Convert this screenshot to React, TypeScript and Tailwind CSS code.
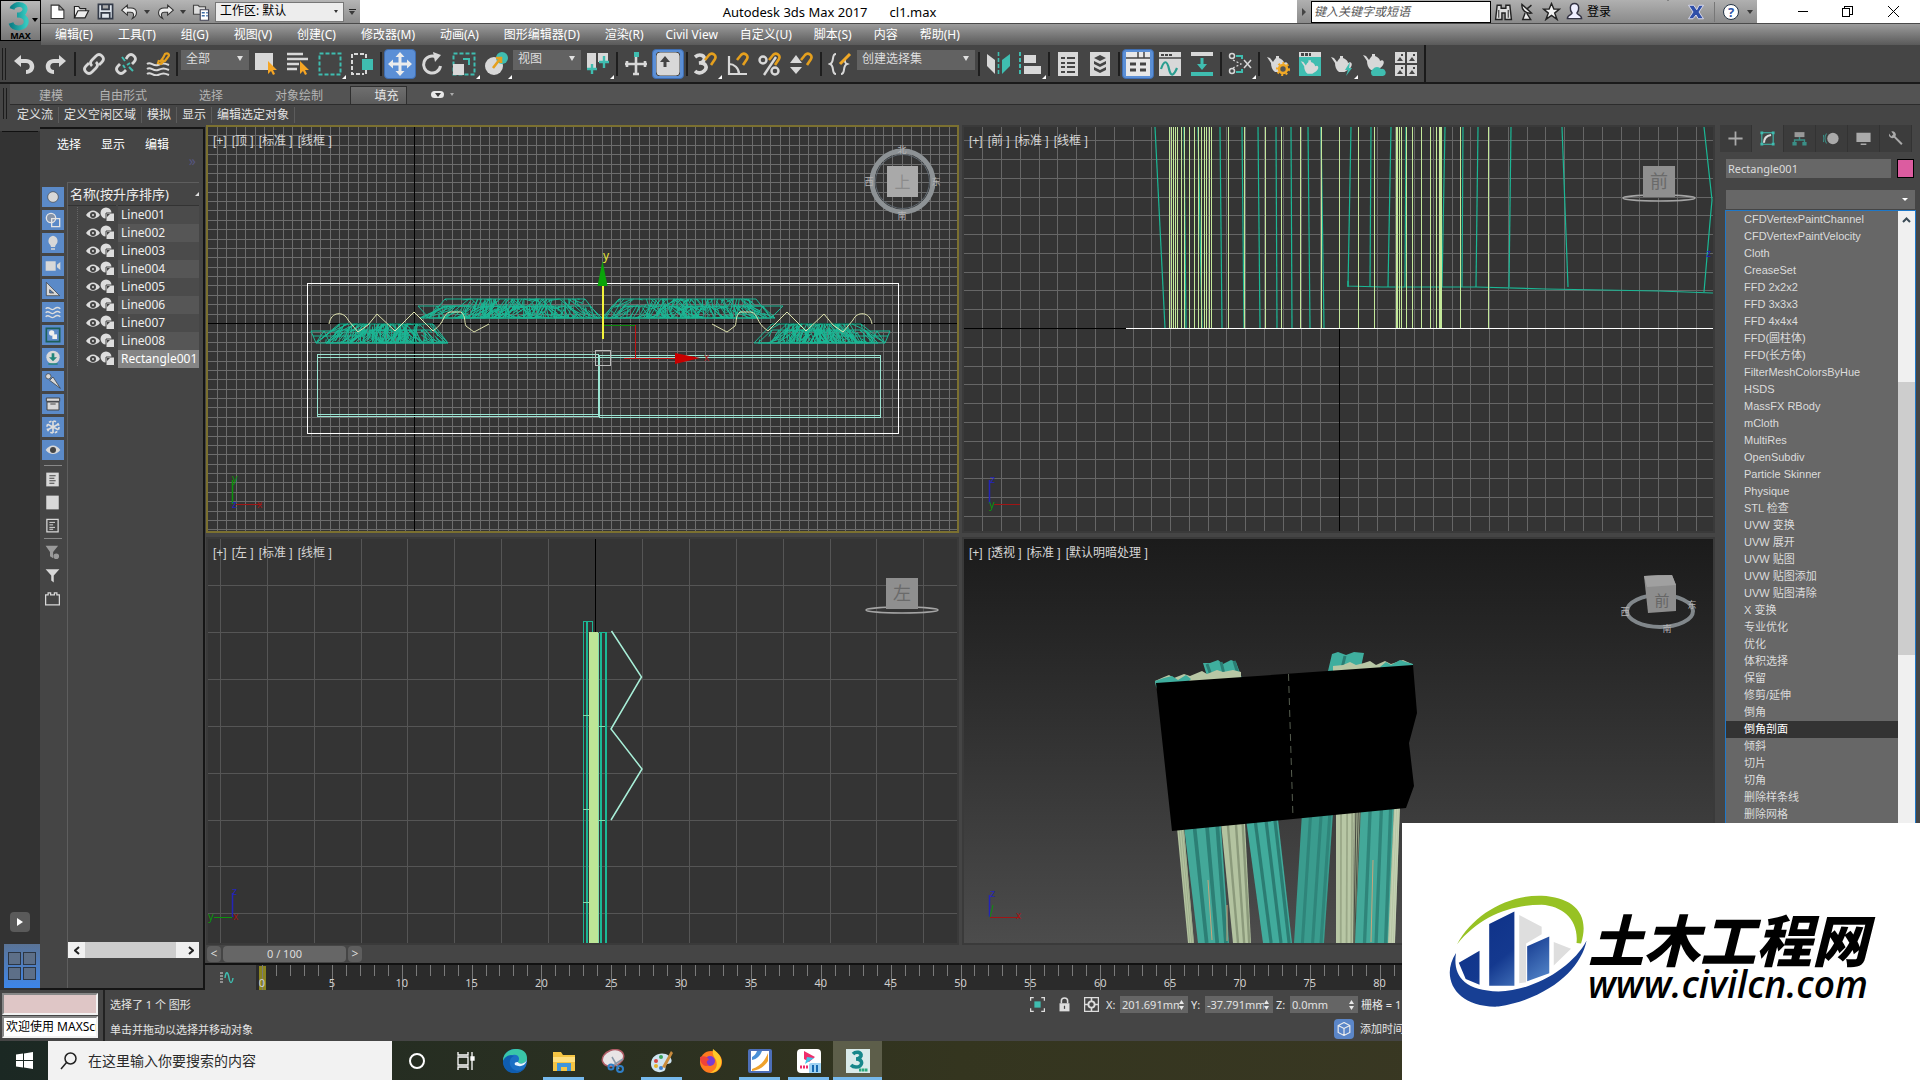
import React from 'react';

const TEAL = '#3fbdb0';
const LIGHT = '#d8d8d8';
const MESH = '#1bb795';
const CREAM = '#c3e89a';

type Kids = { children: React.ReactNode };

function Ico({ children, size = 24 }: Kids & { size?: number }) {
  return (
    <svg width={size} height={size} viewBox="0 0 24 24" fill="none" aria-hidden="true">
      {children}
    </svg>
  );
}

function Teapot({ y = 0 }: { y?: number }) {
  return (
    <path
      transform={`translate(0 ${y})`}
      fill={LIGHT}
      d="M1 5l3 1 3 4c1-2 2-3 3-4V4h3v2c3 1 5 3 5 5 3-2 5 1 3 4-1 2-3 3-5 4-1 1-2 1-3 1H9c-3-2-4-6-4-9z"
    />
  );
}

const Magnet = () => (
  <path d="M11 8l4-5c3-3 8 0 6 4l-4 6" stroke="#e5a01e" strokeWidth="2.6" />
);
const Cursor = ({ y = 0 }: { y?: number }) => (
  <path transform={`translate(0 ${y})`} d="M14 9v13l3-3 2 4 2-1-2-4h4z" fill="#f5a524" />
);

const toolIcons: Record<string, React.ReactNode> = {
  undo: <path d="M9 3L2 9l7 6v-4h5c5 0 5 7 0 7v4c11 0 11-15 0-15H9z" fill={LIGHT} />,
  redo: <path d="M15 3l7 6-7 6v-4h-5c-5 0-5 7 0 7v4C-1 22-1 7 10 7h5z" fill={LIGHT} />,
  link: (
    <g stroke={LIGHT} strokeWidth="2.8">
      <path d="M10 14c-2-2-2-4 0-6l4-4c2-2 4-2 6 0s2 4 0 6l-3 3" />
      <path d="M14 10c2 2 2 4 0 6l-4 4c-2 2-4 2-6 0s-2-4 0-6l3-3" />
    </g>
  ),
  unlink: (
    <g strokeWidth="2.8">
      <path stroke={LIGHT} d="M12 7l2-3c2-2 4-2 6 0s2 4 0 6l-2 2M12 18l-2 2c-2 2-4 2-6 0s-2-4 0-6l2-2" />
      <path stroke={TEAL} strokeWidth="2" d="M8 5l3 4M15 15l4 4M16 11l-3 2M9 13l2 3" />
    </g>
  ),
  bind: (
    <g strokeWidth="2">
      <path stroke={LIGHT} d="M1 12c4-3 6 3 11 1s6-2 11 0M1 17c4-3 6 3 11 1s6-2 11 0M1 22c4-3 6 3 11 1s6-2 11 0" />
      <path stroke="#e5a01e" strokeWidth="2.2" d="M14 10l3-4M13 8l-1 3 3 1 3-3M17 6l2-4c3-2 5 1 3 3l-3 4-3-1" />
    </g>
  ),
  select: (
    <>
      <rect x="1" y="1" width="18" height="17" fill={LIGHT} />
      <Cursor />
    </>
  ),
  byname: (
    <>
      <path stroke={LIGHT} strokeWidth="2.4" d="M1 2h16M1 7h21M1 12h12M1 17h10" />
      <Cursor />
    </>
  ),
  region: <rect x="1.5" y="1.5" width="21" height="21" stroke={TEAL} strokeWidth="2" strokeDasharray="4 2" />,
  windowsel: (
    <>
      <path stroke={LIGHT} strokeWidth="2" strokeDasharray="4 2" d="M14 2H2v20h12M16 2v4M16 18v4" />
      <rect x="12" y="7" width="11" height="11" fill={TEAL} />
    </>
  ),
  move: (
    <path
      fill="#ececec"
      d="M12 0l4.500 5H13.500v5.500H19V7.500l5 4.500-5 4.500V13.500h-5.500V19h3L12 24l-4.500-5h3v-5.500H5v3L0 12l5-4.500v3h5.500V5h-3z"
    />
  ),
  rotate: (
    <>
      <path stroke={LIGHT} strokeWidth="3" d="M16 5a8.500 8.500 0 1 0 4.500 9" />
      <path fill={LIGHT} d="M13 0l8 3-6 7z" />
    </>
  ),
  scale: (
    <>
      <rect x="1.500" y="1.500" width="21" height="21" stroke={TEAL} strokeWidth="2" strokeDasharray="4 2" />
      <rect x="1" y="12" width="11" height="11" fill={LIGHT} />
      <path d="M11 7h6v6" stroke={TEAL} strokeWidth="2" />
    </>
  ),
  place: (
    <>
      <circle cx="10" cy="14" r="9" fill={LIGHT} />
      <circle cx="18" cy="6" r="6" fill={TEAL} />
      <path d="M9 16l7-9M12 6h5v5" stroke="#e5a01e" strokeWidth="2.600" />
    </>
  ),
  pivot: (
    <>
      <path fill={LIGHT} d="M1 1h9v16H1zM12 1h10v9H12z" />
      <path stroke={TEAL} strokeWidth="2.400" d="M6 12v10M1 17h10M18 4v12M13 10h10" />
    </>
  ),
  manip: (
    <>
      <path stroke={LIGHT} strokeWidth="2.600" d="M12 4v19M1 12h22M3 9v6M21 9v6M9 22h6" />
      <rect x="10" y="0" width="5" height="5" fill={TEAL} />
    </>
  ),
  kbd: (
    <>
      <rect x="0" y="0" width="24" height="24" rx="4" fill={LIGHT} stroke="#444" />
      <path d="M9 4l5 6h-3.500v5h-3v-5H4z" fill="#444" />
    </>
  ),
  snap3: (
    <>
      <path stroke={LIGHT} strokeWidth="3.600" d="M1 5c5-4 11-1 9 3-1 3-3 3-5 3 7-1 9 5 5 8-3 3-7 2-9 0" />
      <Magnet />
    </>
  ),
  snapA: (
    <>
      <path stroke={LIGHT} strokeWidth="2.200" d="M3 4v18h18M3 12c5 0 10 4 10 10" />
      <Magnet />
    </>
  ),
  snapP: (
    <>
      <g stroke={LIGHT} strokeWidth="2.400">
        <circle cx="5" cy="8" r="3.500" />
        <circle cx="17" cy="19" r="3.500" />
        <path d="M18 5L6 23" />
      </g>
      <Magnet />
    </>
  ),
  snapS: (
    <>
      <path fill={LIGHT} d="M6 3l6 8H0zM6 22l6-7H0z" />
      <Magnet />
    </>
  ),
  named: (
    <>
      <path stroke={LIGHT} strokeWidth="2" d="M8 2C3 2 7 10 2 12c5 2 1 10 6 10M13 22c5 0 1-8 6-10-3-1-2-3-2-4" />
      <path stroke="#f0a826" strokeWidth="3" d="M12 12l10-10" />
    </>
  ),
  mirror: (
    <>
      <path fill={LIGHT} d="M1 2l8 6v14l-8-8z" />
      <path stroke={TEAL} strokeWidth="1.600" strokeDasharray="4 2" d="M12.500 0v24" />
      <path fill={TEAL} d="M24 2l-8 6v14l8-8z" />
    </>
  ),
  align: (
    <>
      <path stroke={TEAL} strokeWidth="2" strokeDasharray="4 2" d="M2 0v24" />
      <path fill={LIGHT} d="M6 3h12v8H6zM6 14h17v8H6z" />
    </>
  ),
  layer: (
    <>
      <rect x="2" y="0" width="20" height="24" fill={LIGHT} />
      <path stroke="#444" strokeWidth="2.200" d="M5 6h4M11 6h8M5 11h4M11 11h8M5 15h4M11 15h8M5 20h4M11 20h8" />
    </>
  ),
  layers: (
    <>
      <rect x="2" y="0" width="20" height="24" fill={LIGHT} />
      <path fill="#444" d="M12 3l6 3-6 3-6-3zM6 9l6 3 6-3v3l-6 3-6-3zM6 15l6 3 6-3v3l-6 3-6-3z" />
    </>
  ),
  ribbon: (
    <>
      <rect x="0" y="0" width="24" height="24" fill="#e8e8e8" />
      <path stroke="#444" strokeWidth="1.500" d="M0 6h24M12 0v6M18 0v6" />
      <path stroke="#444" strokeWidth="3" d="M4 12h6M14 12h6M4 18h6M14 18h6" />
    </>
  ),
  curve: (
    <>
      <rect x="1" y="0" width="22" height="24" fill={LIGHT} />
      <path stroke="#444" strokeWidth="1.500" d="M1 6h22" />
      <path stroke="#444" strokeWidth="2" d="M3 3h11" strokeDasharray="3 1" />
      <path stroke="#2a9d90" strokeWidth="2.200" d="M3 17c3-9 6-9 8 0s5 6 8-1" />
    </>
  ),
  schematic: (
    <>
      <rect x="1" y="0" width="22" height="4" fill={LIGHT} />
      <rect x="1" y="20" width="22" height="4" fill={TEAL} />
      <path fill={TEAL} d="M10.500 6h3v6H17l-5 6-5-6h3.500z" />
    </>
  ),
  material: (
    <>
      <g stroke={LIGHT} strokeWidth="1.500">
        <circle cx="4" cy="4" r="2.500" />
        <circle cx="4" cy="19" r="2.500" />
        <path d="M16 8l7 8M23 8l-7 8" />
      </g>
      <path stroke={TEAL} strokeWidth="2" d="M8 4h6v3M8 20h6v-3" />
      <path stroke={LIGHT} strokeWidth="1.200" strokeDasharray="2 2" d="M5 8l8 4-8 4" />
    </>
  ),
  rsetup: (
    <>
      <Teapot />
      <circle cx="17" cy="17" r="4" stroke="#f0a826" strokeWidth="2.600" fill="#555" />
      <circle cx="17" cy="17" r="6" stroke="#f0a826" strokeWidth="2" strokeDasharray="2 2.500" />
    </>
  ),
  rframe: (
    <>
      <rect x="1" y="0" width="22" height="24" fill={TEAL} />
      <rect x="1" y="0" width="22" height="5" fill={LIGHT} />
      <path stroke="#444" strokeWidth="3" d="M3 2.500h10" strokeDasharray="3 1" />
      <g transform="translate(2 5) scale(.84)">
        <Teapot />
      </g>
    </>
  ),
  render: (
    <>
      <Teapot />
      <path d="M20 10l-5 8h3l-2 6 6-8h-3z" fill={TEAL} />
    </>
  ),
  cloud: (
    <>
      <Teapot y={-2} />
      <path fill={TEAL} d="M11 24a4 4 0 0 1 0-7 5 5 0 0 1 8 0 3.500 3.500 0 0 1 2 7z" />
    </>
  ),
  gallery: (
    <>
      <path fill={LIGHT} d="M1 0h10v11H1zM13 0h10v11H13zM1 13h10v11H1zM13 13h10v11H13z" />
      <path fill="#444" d="M3 9l3-4 3 4zM15 9l3-4 3 4zM3 22l3-4 3 4zM15 22l3-4 3 4zM7 2h2v2H7zM19 2h2v2h-2zM7 15h2v2H7zM19 15h2v2h-2z" />
    </>
  ),
};

type Tool = { id: string; label: string; on?: boolean; fly?: boolean };

function ToolButton({ id, label, on, fly }: Tool) {
  return (
    <button
      type="button"
      aria-label={label}
      className={`relative flex h-[30px] w-8 items-center justify-center ${
        on ? 'rounded-sm border border-[#3f6db0] bg-[#5b8fd6]' : ''
      }`}
    >
      <Ico>{toolIcons[id]}</Ico>
      {fly && (
        <span className="absolute bottom-0 right-0 border-b-4 border-l-4 border-b-white border-l-transparent" />
      )}
    </button>
  );
}

const Sep = () => <div className="mx-[2px] h-6 w-[2px] bg-[#1e1e1e]" />;

function ToolSelect({ label, value, wide }: { label: string; value: string; wide?: boolean }) {
  return (
    <div
      className={`relative mx-px h-5 self-start bg-[#626262] text-[#dedede] ${wide ? 'w-[118px]' : 'w-[68px]'}`}
    >
      <select aria-label={label} className="block h-5 w-full appearance-none bg-transparent pb-[2px] pl-[5px] text-xs leading-4">
        <option>{value}</option>
      </select>
      <span className="pointer-events-none absolute right-[6px] top-[6px] border-x-[3px] border-t-[5px] border-x-transparent border-t-[#e0e0e0]" />
    </div>
  );
}

function Toolbar() {
  return (
    <div className="flex h-[39px] border-b-2 border-[#1a1a1a] bg-[#454545]">
      <div className="flex items-center border-r-2 border-[#1a1a1a] pr-[2px]">
        <div className="mx-[2px] h-8 w-1 border-x border-[#1c1c1c]" />
        <ToolButton id="undo" label="撤消" />
        <ToolButton id="redo" label="重做" />
        <Sep />
        <ToolButton id="link" label="链接" />
        <ToolButton id="unlink" label="取消链接" />
        <ToolButton id="bind" label="绑定到空间扭曲" />
        <Sep />
        <div className="flex h-[28px]">
          <ToolSelect label="选择过滤器" value="全部" />
        </div>
        <ToolButton id="select" label="选择对象" />
        <ToolButton id="byname" label="按名称选择" />
        <ToolButton id="region" label="矩形选择区域" fly />
        <ToolButton id="windowsel" label="窗口/交叉" />
        <Sep />
        <ToolButton id="move" label="选择并移动" on />
        <ToolButton id="rotate" label="选择并旋转" />
        <ToolButton id="scale" label="选择并缩放" fly />
        <ToolButton id="place" label="选择并放置" fly />
        <div className="flex h-[28px]">
          <ToolSelect label="参考坐标系" value="视图" />
        </div>
        <ToolButton id="pivot" label="使用轴点中心" fly />
        <Sep />
        <ToolButton id="manip" label="选择并操纵" />
        <ToolButton id="kbd" label="键盘快捷键覆盖" on />
        <Sep />
        <ToolButton id="snap3" label="捕捉开关" fly />
        <ToolButton id="snapA" label="角度捕捉" />
        <ToolButton id="snapP" label="百分比捕捉" />
        <ToolButton id="snapS" label="微调器捕捉" />
        <Sep />
        <ToolButton id="named" label="编辑命名选择集" />
        <div className="flex h-[28px]">
          <ToolSelect label="命名选择集" value="创建选择集" wide />
        </div>
        <Sep />
        <ToolButton id="mirror" label="镜像" />
        <ToolButton id="align" label="对齐" fly />
        <Sep />
        <ToolButton id="layer" label="场景资源管理器" />
        <ToolButton id="layers" label="层资源管理器" />
        <Sep />
        <ToolButton id="ribbon" label="切换功能区" on />
        <ToolButton id="curve" label="曲线编辑器" />
        <ToolButton id="schematic" label="图解视图" />
        <Sep />
        <ToolButton id="material" label="材质编辑器" fly />
        <Sep />
        <ToolButton id="rsetup" label="渲染设置" />
        <ToolButton id="rframe" label="渲染帧窗口" />
        <ToolButton id="render" label="渲染产品" fly />
        <ToolButton id="cloud" label="云渲染" />
        <ToolButton id="gallery" label="渲染库" />
      </div>
    </div>
  );
}

const Caret = () => <span className="border-x-[3px] border-t-4 border-x-transparent border-t-[#3a3a3a]" />;

const quickIcons: [string, React.ReactNode][] = [
  ['新建', <path key="n" d="M3 3h11l7 7v12H3zM14 3v7h7" fill="#fff" stroke="#333" strokeWidth="1.500" />],
  ['打开', <path key="o" d="M2 21V5h6l2 3h8v3M2 21l5-10h15l-5 10z" fill="#eee" stroke="#222" strokeWidth="1.600" />],
  ['保存', <path key="s" d="M2 2h20v20H2zM7 2v7h10V2M6 22v-8h12v8" fill="#dfe6ee" stroke="#333a48" strokeWidth="2.400" />],
];

function TitleBar() {
  return (
    <div className="flex h-6 border-b border-[#4a4a4a] bg-white">
      <div className="flex items-center bg-gradient-to-b from-[#b5b5b5] to-[#8c8c8c] pl-1">
        {quickIcons.map(([label, icon]) => (
          <button key={label} type="button" aria-label={label} className="flex w-6 justify-center">
            <Ico size={17}>{icon}</Ico>
          </button>
        ))}
        <button type="button" aria-label="撤消操作" className="flex w-6 justify-center">
          <Ico size={17}>
            <path d="M9 3L1 10l8 7v-4h5c4 0 5 4 2 9 8-4 8-15-2-15H9z" fill="#eee" stroke="#333" strokeWidth="1.500" />
          </Ico>
        </button>
        <span className="flex w-3 justify-center"><Caret /></span>
        <button type="button" aria-label="重做操作" className="flex w-6 justify-center">
          <Ico size={17}>
            <path d="M15 3l8 7-8 7v-4h-5c-4 0-5 4-2 9C0 18 0 7 10 7h5z" fill="#eee" stroke="#333" strokeWidth="1.500" />
          </Ico>
        </button>
        <span className="flex w-3 justify-center"><Caret /></span>
        <button type="button" aria-label="项目文件夹" className="mr-[2px] flex w-6 justify-center">
          <Ico size={18}>
            <path d="M2 3h6l2 2h8v10H2z" fill="#ddd" stroke="#444" strokeWidth="1.500" />
            <path d="M11 9h11v14H11z" fill="#fff" stroke="#445" strokeWidth="1.500" />
            <path d="M13 13h4M13 17h4M19 13h2M19 17h2" stroke="#3c6ba5" strokeWidth="2" />
          </Ico>
        </button>
        <div className="relative h-5 w-[129px] border border-[#777] bg-[#ededed]">
          <select aria-label="工作区" className="block h-[18px] w-full appearance-none bg-transparent pb-px pl-1 text-xs leading-4 text-black">
            <option>工作区: 默认</option>
          </select>
          <span className="pointer-events-none absolute right-[5px] top-[7px] border-x-[2px] border-t-[3px] border-x-transparent border-t-[#333]" />
        </div>
        <button type="button" aria-label="自定义快速访问" className="flex w-4 flex-col items-center gap-px">
          <span className="h-px w-[7px] bg-[#222]" />
          <Caret />
        </button>
      </div>
      <h1 className="flex flex-1 items-center justify-center gap-[22px] pl-[2px] text-[13px] leading-4 text-black">
        <span>Autodesk 3ds Max 2017</span>
        <span>cl1.max</span>
      </h1>
      <div className="flex w-[460px] items-center bg-gradient-to-b from-[#b0b0b0] to-[#8a8a8a] text-black">
        <span className="mx-[5px] border-y-[4px] border-l-4 border-y-transparent border-l-[#444]" />
        <input
          aria-label="搜索"
          placeholder="键入关键字或短语"
          className="h-[22px] w-[180px] border border-black bg-white pl-[2px] text-xs italic text-black placeholder:text-[#555]"
        />
        <button type="button" aria-label="查找" className="flex w-6 justify-center">
          <Ico size={19}>
            <path d="M4 4h5v4h6V4h5l2 18h-8v-8h-4v8H2z" fill="#ddd" stroke="#222" strokeWidth="1.800" />
            <path d="M6 10v10M18 10v10" stroke="#444" strokeWidth="1.500" />
          </Ico>
        </button>
        <button type="button" aria-label="通讯中心" className="flex w-6 justify-center">
          <Ico size={19}>
            <path d="M5 3c-1 7 5 12 12 11zM11 9l6-5M9 14l-3 8h10l-5-8" fill="#eee" stroke="#222" strokeWidth="1.800" />
          </Ico>
        </button>
        <button type="button" aria-label="收藏夹" className="flex w-6 justify-center">
          <Ico size={19}>
            <path d="M12 2l3 7h7l-6 5 3 8-7-5-7 5 3-8-6-5h7z" fill="#f2f2f2" stroke="#222" strokeWidth="1.800" />
          </Ico>
        </button>
        <button type="button" className="ml-[2px] flex items-center gap-[3px] text-xs leading-4">
          <Ico size={19}>
            <path d="M12 2c7 0 6 9 3 12 0 2 6 2 6 7H3c0-5 6-5 6-7-3-3-4-12 3-12z" fill="#eef" stroke="#334" strokeWidth="1.800" />
          </Ico>
          登录
        </button>
        <span className="ml-auto mr-4"><Caret /></span>
        <button type="button" aria-label="Exchange" className="mr-[9px]">
          <Ico size={18}>
            <path d="M2 3h7l4 6 3-6h6l-6 9 6 9h-7l-3-5-4 5H2l6-9z" fill="#2f4fa8" stroke="#dde" strokeWidth="1.300" />
          </Ico>
        </button>
        <span className="mr-2 h-5 w-px bg-[#777]" />
        <button type="button" aria-label="帮助" className="flex h-4 w-4 items-center justify-center rounded-full border border-[#234] bg-white text-[13px] font-bold leading-4 text-[#2f56a8]">
          ?
        </button>
        <span className="ml-2 mr-1 flex"><Caret /></span>
      </div>
      <div className="flex w-[163px] items-center justify-around pl-6 pr-1 text-black">
        <button type="button" aria-label="最小化" className="h-px w-[10px] bg-black" />
        <button type="button" aria-label="还原">
          <svg width="11" height="11" fill="none" stroke="#000" shapeRendering="crispEdges">
            <path d="M.5 2.500h7v8h-7zM2.500 2.500v-2h8v8h-3" />
          </svg>
        </button>
        <button type="button" aria-label="关闭">
          <svg width="11" height="11" stroke="#000"><path d="M0 0l11 11M11 0L0 11" /></svg>
        </button>
      </div>
    </div>
  );
}

const menus = ['编辑(E)', '工具(T)', '组(G)', '视图(V)', '创建(C)', '修改器(M)', '动画(A)', '图形编辑器(D)', '渲染(R)'];
const moreMenus = ['Civil View', '自定义(U)', '脚本(S)', '内容', '帮助(H)'];

const MenuItem = ({ name }: { name: string }) => (
  <button type="button" className="whitespace-nowrap">
    {name}
  </button>
);

function Header() {
  return (
    <header className="flex h-[45px] bg-[#454545]">
      <button type="button" aria-label="应用程序菜单" className="relative flex h-[41px] w-[41px] flex-col items-center border border-black bg-gradient-to-b from-[#b8b8b8] to-[#777]">
        <svg width="24" height="30" viewBox="0 0 24 30" className="mr-1" fill="none">
          <defs>
            <linearGradient id="three" x1="0" x2="1">
              <stop offset="0" stopColor="#0c7f86" />
              <stop offset="1" stopColor="#35c9c0" />
            </linearGradient>
          </defs>
          <path d="M5 8c2-6 14-6 13 1-1 4-5 5-8 5 12 0 12 12 2 13-4 0-7-2-8-5" stroke="url(#three)" strokeWidth="5" />
        </svg>
        <span className="text-[9px] font-bold leading-[9px] text-black">MAX</span>
        <span className="absolute right-[2px] top-[17px] border-x-[3px] border-t-4 border-x-transparent border-t-black" />
      </button>
      <div className="flex-1">
        <TitleBar />
        <nav className="flex h-[21px] items-center gap-[22px] bg-gradient-to-b from-[#9c9c9c] to-[#5a5a5a] pl-[14px] text-xs leading-4 text-white">
          <div className="flex gap-[25px]">
            {menus.map((m) => <MenuItem key={m} name={m} />)}
          </div>
          {moreMenus.map((m) => <MenuItem key={m} name={m} />)}
        </nav>
      </div>
    </header>
  );
}

function Ribbon() {
  return (
    <div className="flex bg-[#454545] text-xs text-[#b4b4b4]">
      <div className="mx-[3px] my-1 w-1 border-x border-[#1c1c1c]" />
      <div className="flex-1">
        <div className="flex h-[21px] items-end border-b border-[#2c2c2c] bg-[#535353]">
          <div className="flex items-center gap-[52px] pl-[29px] leading-[17px]">
            <div className="flex gap-9">
              <button type="button">建模</button>
              <button type="button">自由形式</button>
            </div>
            <button type="button">选择</button>
            <button type="button">对象绘制</button>
          </div>
          <button type="button" className="ml-[27px] h-[18px] w-[57px] border border-b-0 border-[#2e2e2e] bg-gradient-to-b from-[#6f6f6f] to-[#5c5c5c] pl-4 leading-[17px] text-[#e6e6e6]">
            填充
          </button>
          <button type="button" aria-label="功能区选项" className="mb-[6px] ml-6 flex items-center gap-[6px]">
            <span className="flex h-[7px] w-[13px] items-center justify-center rounded-sm bg-[#e8e8e8]"><Caret /></span>
            <span className="border-x-2 border-t-[3px] border-x-transparent border-t-[#aaa]" />
          </button>
        </div>
        <div className="flex h-[18px] items-center pl-[2px] pt-[2px] text-[#e2e2e2]">
          {['定义流', '定义空闲区域', '模拟', '显示', '编辑选定对象'].map((t) => (
            <button key={t} type="button" className="border-r border-[#5c5c5c] px-[5px] leading-4">
              {t}
            </button>
          ))}
        </div>
      </div>
    </div>
  );
}

const filterIcons: [string, React.ReactNode][] = [
  ['几何体', <circle key="a" cx="12" cy="12" r="8" fill={LIGHT} stroke="#444" />],
  ['图形', <g key="b" stroke="#e4e4e4" strokeWidth="2"><circle cx="9" cy="9" r="7" fill="#8593a8" /><path d="M10 10h12v12H10z" /></g>],
  ['灯光', <path key="c" d="M12 1a8 8 0 0 1 4 14l-1 3H9l-1-3a8 8 0 0 1 4-14zM9 20h6v2H9z" fill={LIGHT} />],
  ['摄影机', <path key="d" d="M1 5h15v14H1zM18 10l5-4v12l-5-4z" fill={LIGHT} />],
  ['辅助对象', <path key="e" d="M2 2l20 20H2zM7 13v5h6z" fill={LIGHT} fillRule="evenodd" stroke="#333" />],
  ['空间扭曲', <path key="f" d="M1 7c5-5 8 4 12 1s6-4 10-1M1 13c5-5 8 4 12 1s6-4 10-1M1 19c5-5 8 4 12 1s6-4 10-1" stroke="#ddd" strokeWidth="2" />],
  ['组', <g key="g"><path d="M2 2h20v20H2z" stroke="#1c5f5a" strokeWidth="2.500" /><circle cx="10" cy="9" r="4" fill="#eee" /><path d="M11 11h7v7h-7z" fill="#eee" /></g>],
  ['外部参照', <g key="h"><circle cx="12" cy="11" r="10" fill={LIGHT} /><path d="M10 5h4v6h4l-6 6-6-6h4zM5 20h14v2H5z" fill="#21857a" /></g>],
  ['骨骼', <g key="i" fill={LIGHT} stroke="#333"><circle cx="5" cy="5" r="4" /><path d="M7 11l5-5 11 17z" /></g>],
  ['容器', <path key="j" d="M2 3h20v5H2zM3 9h18v12H3zM8 12h8" fill={LIGHT} stroke="#444" strokeWidth="1.500" />],
  ['冻结', <g key="k" stroke="#ddd" strokeWidth="2.500"><circle cx="12" cy="12" r="9" strokeDasharray="4 3" /><path d="M12 3v18M4 8l16 8M20 8L4 16" /></g>],
  ['隐藏', <g key="l"><path d="M1 12c6-9 16-9 22 0-6 8-16 8-22 0z" fill={LIGHT} /><circle cx="12" cy="12" r="4.500" fill="#444" /></g>],
];

const plainIcons: [string, React.ReactNode][] = [
  ['全部显示', <g key="a"><path d="M2 1h20v22H2z" fill={LIGHT} /><path d="M7 6h10M7 10h8M7 14h10M7 18h8" stroke="#444" strokeWidth="1.800" /></g>],
  ['全部不显示', <path key="b" d="M2 1h20v22H2z" fill={LIGHT} />],
  ['反转显示', <g key="c" stroke={LIGHT} strokeWidth="2"><path d="M3 2h18v20H3z" /><path d="M7 7h9M7 11h6M7 15h9M7 18h6" strokeWidth="1.600" /></g>],
];
const funnelIcons: [string, React.ReactNode][] = [
  ['过滤器设置', <g key="a" fill="#9a9a9a"><path d="M1 1h20l-8 10v10l-5-3v-7z" /><circle cx="18" cy="18" r="3.500" stroke="#9a9a9a" strokeWidth="2" /></g>],
  ['过滤器', <path key="b" d="M1 2h22l-9 10v11l-4-3v-8z" fill={LIGHT} />],
  ['包围盒', <path key="c" d="M1 6h4V3h4v3h6V3h4v3h4v16H1z" stroke={LIGHT} strokeWidth="2" />],
];

const Chevrons = () => <span className="text-sm leading-4 text-[#55557f]">»</span>;

const objects = ['Line001', 'Line002', 'Line003', 'Line004', 'Line005', 'Line006', 'Line007', 'Line008', 'Rectangle001'];

function Explorer() {
  return (
    <aside className="flex w-[205px] shrink-0 bg-[#454545]">
      <div className="flex w-[40px] flex-col border-t-8 border-[#454545] bg-[#333]">
        <div className="mx-[2px] h-px bg-[#111]" />
        <button type="button" aria-label="展开" className="mb-3 ml-[10px] mt-auto flex h-5 w-5 items-center justify-center rounded-sm bg-[#5a5a5a]">
          <span className="border-y-4 border-l-[6px] border-y-transparent border-l-white" />
        </button>
        <button type="button" aria-label="视口布局" className="mb-[2px] ml-1 grid h-11 w-9 grid-cols-2 grid-rows-2 gap-[2px] bg-gradient-to-b from-[#5a7396] to-[#3c86ea] px-1 pb-2 pt-2">
          {[0, 1, 2, 3].map((n) => (
            <span key={n} className="border border-[#2c3644] bg-[#5d6f88]" />
          ))}
        </button>
      </div>
      <div className="mt-1 flex min-w-0 flex-1 flex-col border-b-2 border-r-2 border-t-2 border-[#151515] pr-1">
        <div className="flex h-6 items-end gap-5 pl-[17px] text-xs leading-4 text-white">
          <button type="button">选择</button>
          <button type="button">显示</button>
          <button type="button">编辑</button>
        </div>
        <div className="flex h-[29px] justify-end pr-[3px]"><Chevrons /></div>
        <div className="flex flex-1">
          <div className="flex w-[27px] flex-col items-center gap-[3px] pr-[2px] pt-[5px]">
            {filterIcons.map(([label, icon]) => (
              <button key={label} type="button" aria-label={label} className="flex h-5 w-[22px] items-center justify-center bg-[#5b8ac8]">
                <Ico size={16}>{icon}</Ico>
              </button>
            ))}
            <div className="mt-[2px] h-px w-[18px] bg-[#888]" />
            {plainIcons.map(([label, icon]) => (
              <button key={label} type="button" aria-label={label} className="flex h-5 w-[22px] items-center justify-center">
                <Ico size={15}>{icon}</Ico>
              </button>
            ))}
            <div className="h-px w-[18px] bg-[#888]" />
            {funnelIcons.map(([label, icon]) => (
              <button key={label} type="button" aria-label={label} className="flex h-5 w-[22px] items-center justify-center">
                <Ico size={15}>{icon}</Ico>
              </button>
            ))}
          </div>
          <div className="flex flex-1 flex-col border-l border-t border-[#5e5e5e]">
            <table className="w-full border-collapse text-left">
              <thead>
                <tr className="h-[22px] border-b border-[#333] text-[13px] leading-5 text-[#eee]">
                  <th colSpan={2} className="pl-[2px] font-normal">
                    <div className="flex items-center justify-between">
                      名称(按升序排序)
                      <span className="border-b-4 border-l-4 border-b-[#ddd] border-l-transparent" />
                    </div>
                  </th>
                </tr>
              </thead>
              <tbody>
                {objects.map((o, i) => (
                  <tr key={o} className="h-[18px] text-[12px] leading-[18px] text-[#eee]">
                    <td className="w-[49px] p-0">
                      <div className="ml-[9px] flex items-center border-l border-dotted border-[#666] pl-[8px]">
                        <svg width="14" height="10" viewBox="0 0 14 10">
                          <path d="M0 5c4-6 10-6 14 0-4 5-10 5-14 0z" fill="#ddd" />
                          <circle cx="7" cy="5" r="3" fill="#444" />
                          <circle cx="7" cy="5" r="1" fill="#ddd" />
                        </svg>
                        <svg width="15" height="15" viewBox="0 0 15 15">
                          <circle cx="6" cy="6" r="5.500" fill="#ddd" />
                          <path d="M6 6h8.500v8.500H6z" fill="#ddd" stroke="#444" />
                          <path d="M7 10l3-3h-3z" fill="#444" />
                        </svg>
                      </div>
                    </td>
                    <td className={`border-l-2 border-[#454545] p-0 pl-[3px] ${o === 'Rectangle001' ? 'bg-[#858585] text-white' : i % 2 ? 'bg-[#565656]' : 'bg-[#4b4b4b]'}`}>
                      {o}
                    </td>
                  </tr>
                ))}
              </tbody>
            </table>
            <div className="mb-[30px] mt-auto flex h-4 items-center justify-between bg-[#f0f0f0] text-[#222]">
              <button type="button" aria-label="向左" className="flex w-[17px] justify-center">
                <svg width="6" height="9" fill="none" stroke="currentColor" strokeWidth="2"><path d="M5 1L1 4.500 5 8" /></svg>
              </button>
              <div className="mr-[6px] h-4 flex-1 bg-[#cdcdcd]" />
              <button type="button" aria-label="向右" className="flex w-[17px] justify-center">
                <svg width="6" height="9" fill="none" stroke="currentColor" strokeWidth="2"><path d="M1 1l4 3.500L1 8" /></svg>
              </button>
            </div>
          </div>
        </div>
      </div>
    </aside>
  );
}

function range(from: number, to: number, origin: number, step: number) {
  const out: number[] = [];
  for (let k = Math.ceil((from - origin) / step); origin + k * step < to; k++) out.push(Math.round(origin + k * step) + 0.5);
  return out;
}

type GridProps = { box: [number, number, number, number]; ox: number; oy: number; step: number; color: string };

function Grid({ box: [x, y, w, h], ox, oy, step, color }: GridProps) {
  return (
    <path
      shapeRendering="crispEdges"
      stroke={color}
      fill="none"
      d={
        range(x, x + w, ox, step).map((v) => `M${v} ${y}v${h}`).join('') +
        range(y, y + h, oy, step).map((v) => `M${x} ${v}h${w}`).join('')
      }
    />
  );
}

function meshPath(tl: number, tr: number, bl: number, br: number, top: number, bottom: number, seed: number) {
  let s = seed;
  const rnd = () => {
    s = (s * 16807) % 2147483647;
    return s / 2147483647;
  };
  const at = (u: number, v: number) => {
    const l = tl + (bl - tl) * v;
    const r = tr + (br - tr) * v;
    return `${(l + (r - l) * u).toFixed(1)} ${(top + (bottom - top) * v).toFixed(1)}`;
  };
  let d = `M${at(0, 0)}L${at(1, 0)}L${at(1, 1)}L${at(0, 1)}Z`;
  for (let i = 0; i < 120; i++) {
    const u = Math.min(0.96, Math.max(0.02, (rnd() + rnd()) / 2 + (rnd() - 0.5) * 0.5));
    const v = rnd();
    const u2 = Math.min(1, Math.max(0, u + (rnd() - 0.5) * 0.16));
    d += `M${at(u, v)}L${at(u2, rnd() > 0.5 ? 1 : 0)}`;
  }
  return d;
}

function Label({ parts }: { parts: string[] }) {
  return (
    <div className="absolute left-[5px] top-[6px] flex gap-[5px] font-['Liberation_Sans','Noto_Sans_CJK_SC',sans-serif] text-xs leading-4 text-[#d6d6d6]">
      {parts.map((p) => (
        <button key={p} type="button" className="whitespace-pre">{p}</button>
      ))}
    </div>
  );
}

function View({ parts, box, active, shaded, children }: Kids & { parts: string[]; box: [number, number, number, number]; active?: boolean; shaded?: boolean }) {
  return (
    <section
      className={`relative overflow-hidden border-2 ${active ? 'border-[#7b7030]' : 'border-[#3a3a3a]'} ${
        shaded ? 'bg-gradient-to-b from-[#1b1b1b] to-[#4c4c4c]' : 'bg-[#343434]'
      }`}
    >
      <svg className="absolute inset-0 h-full w-full" viewBox={box.join(' ')} preserveAspectRatio="xMinYMin slice" fill="none">
        {children}
      </svg>
      <Label parts={parts} />
    </section>
  );
}

function FlatCube({ x, y, face }: { x: number; y: number; face: string }) {
  return (
    <g>
      <ellipse cx={x} cy={y + 17} rx="36" ry="3" stroke="#a5a5a5" strokeWidth="1.500" />
      <rect x={x - 16} y={y - 15} width="32" height="31" fill="#8f8f8f" />
      <text x={x} y={y + 7} textAnchor="middle" fontSize="18" fill="#6a6a6a">{face}</text>
    </g>
  );
}

const curve =
  'M329 324C331 311 344 311 348 320L358 332 368 325 377 314 395 331 414 312 433 331C446 322 442 314 450 312L461 312C466 316 464 322 466 326L474 332 489 324';

function TopView() {
  const box: [number, number, number, number] = [208, 127, 749, 404];
  return (
    <View parts={['[+]', '[顶 ]', '[标准 ]', '[线框 ]']} box={box} active>
      <Grid box={box} ox={414} oy={323} step={9.38} color="#6c6c6c" />
      <path d="M414.500 127v404M208 323.500h749" stroke="#000" shapeRendering="crispEdges" />
      <g stroke={MESH}>
        <path d={meshPath(445, 585, 429, 600, 299, 318, 11)} />
        <path d={meshPath(445, 590, 420, 602, 306, 318, 29)} />
        <path d={meshPath(619, 756, 602, 771, 299, 318, 53)} />
        <path d={meshPath(612, 762, 604, 775, 306, 318, 71)} />
        <path d={meshPath(339, 433, 316, 448, 324, 343, 97)} />
        <path d={meshPath(339, 433, 326, 446, 330, 343, 131)} />
        <path d={meshPath(772, 861, 754, 885, 324, 343, 173)} />
        <path d={meshPath(772, 865, 758, 878, 330, 343, 211)} />
        <path d="M418 306h52M418 306l11 12 8-12 8 12 8-12M783 306h-50M783 306l-12 12-8-12-8 12-8-12M311 331h30M311 331l5 12 8-12 6 12M313 336h50M890 331h-30M890 331l-5 12-8-12-6 12M888 336h-50" />
      </g>
      <g stroke="#dfe3ae">
        <path d={curve} />
        <path d={curve} transform="translate(1201 0) scale(-1 1)" />
      </g>
      <g shapeRendering="crispEdges">
        <path d="M307.500 283.500h591v150h-591z" stroke="#fff" />
        <path d="M317.500 354.500h281v62h-281zM317 357.500h281M317 414.500h281M599.500 355.500h281v62h-281zM599 357.500h281M599 415.500h281" stroke="#9be5d3" />
        <path d="M603 325.500h33" stroke="#0b8a0b" />
        <path d="M635.500 325v33M624 358.500h52" stroke="#c41414" />
        <path d="M595.500 350.500h15v15h-15z" stroke="#bbb" />
        <path d="M602.500 282v57" stroke="#f4f43a" strokeWidth="2" />
      </g>
      <path d="M602.500 261l5 25h-10z" fill="#09a509" />
      <path d="M675 353l25 5-25 6z" fill="#c80000" />
      <text x="603" y="260" fontSize="12" fill="#e4e43a">y</text>
      <text x="704" y="361" fontSize="10" fill="#b01818">x</text>
      <circle cx="902.500" cy="181.500" r="30.500" stroke="#8d9295" strokeWidth="5" />
      <circle cx="902.500" cy="181.500" r="27" stroke="#5f6870" />
      <rect x="887" y="166" width="31" height="31" fill="#a9a9a9" />
      <text x="902.500" y="188" textAnchor="middle" fontSize="16" fill="#8c8c8c">上</text>
      <g fontSize="9" fill="#b4b4b4" textAnchor="middle">
        <text x="902" y="153">北</text>
        <text x="902" y="219">南</text>
        <text x="869" y="185">西</text>
        <text x="936" y="185">东</text>
      </g>
      <path d="M232.500 504v-24" stroke="#0c930c" strokeWidth="1.500" />
      <path d="M236 504.500h26" stroke="#a01515" />
      <text x="232" y="482" fontSize="11" fill="#0c930c">y</text>
      <text x="257" y="508" fontSize="10" fill="#a01515">x</text>
      <text x="232" y="508" fontSize="10" fill="#2020c0">z</text>
    </View>
  );
}

const creamLines = [1169, 1171, 1173, 1175, 1177, 1181, 1184, 1189, 1194, 1198, 1201, 1204, 1206, 1209, 1211, 1228, 1244, 1265, 1281, 1300, 1321, 1339, 1358, 1374, 1396, 1397, 1399, 1401, 1406, 1412, 1421, 1430, 1436, 1439, 1440, 1441, 1460, 1488];
const tealFull: [number, number][] = [[1155, 1165], [1184, 1186], [1198, 1202], [1220, 1222], [1242, 1244], [1258, 1260], [1276, 1277], [1291, 1292], [1308, 1310], [1321, 1324]];
const tealShort: [number, number][] = [[1351, 1348], [1371, 1370], [1391, 1388], [1406, 1405], [1445, 1442], [1463, 1462], [1478, 1476], [1511, 1509], [1562, 1568]];

function FrontView() {
  const box: [number, number, number, number] = [964, 127, 749, 404];
  return (
    <View parts={['[+]', '[前 ]', '[标准 ]', '[线框 ]']} box={box}>
      <Grid box={box} ox={1339} oy={328} step={18.77} color="#666" />
      <g stroke={MESH} strokeWidth="1.200">
        {tealFull.map(([a, b]) => <path key={a} d={`M${a} 127L${b} 328`} />)}
        {tealShort.map(([a, b]) => <path key={a} d={`M${a} 127L${b} 287`} />)}
        <path d="M1704 127l8 73-2 22-6 70M1348 281v5l34 1h94M1405 287h71l70 2 113 2 54 2" />
      </g>
      <path d={creamLines.map((v) => `M${v}.500 127v201`).join('')} stroke={CREAM} shapeRendering="crispEdges" />
      <path d="M964 328.500h162M1339.500 329v202" stroke="#000" shapeRendering="crispEdges" />
      <path d="M1126 328.500h588" stroke="#fff" shapeRendering="crispEdges" />
      <FlatCube x={1659} y={181} face="前" />
      <path d="M989.500 504v-24" stroke="#2424b8" strokeWidth="1.500" />
      <path d="M994 504.500h26" stroke="#a01515" />
      <text x="990" y="483" fontSize="11" fill="#2424b8">z</text>
      <text x="989" y="508" fontSize="11" fill="#0c930c">y</text>
      <text x="1706" y="257" fontSize="11" fill="#2424b8">z</text>
    </View>
  );
}

function LeftView() {
  const box: [number, number, number, number] = [208, 539, 749, 404];
  return (
    <View parts={['[+]', '[左 ]', '[标准 ]', '[线框 ]']} box={box}>
      <Grid box={box} ox={595} oy={585} step={46.9} color="#555" />
      <g shapeRendering="crispEdges">
        <path d="M595.500 539v94" stroke="#000" />
        <path d="M583.500 943V621.500h9V632M586.500 622v321M606.500 943V632.500h-8M605.500 633v310M601.500 633v310" stroke={MESH} />
        <path d="M587.500 622v321M600.500 633v310" stroke={MESH} />
        <rect x="589" y="632" width="9" height="311" fill="#bde697" />
        <path d="M598.500 633v310M583 715.500h6M583 809.500h6M583 902.500h6M598 726.500h7M598 820.500h7" stroke="#7fdcae" />
      </g>
      <path d="M611.500 631l30 46-30.500 52 31 40-31 51" stroke="#a8efd8" strokeWidth="1.500" />
      <FlatCube x={902} y={593} face="左" />
      <path d="M232.500 917v-24" stroke="#2424b8" strokeWidth="1.500" />
      <path d="M214 917.500h18" stroke="#0c930c" />
      <text x="232" y="895" fontSize="11" fill="#2424b8">z</text>
      <text x="208" y="920" fontSize="11" fill="#0c930c">y</text>
      <text x="233" y="920" fontSize="10" fill="#a01515">x</text>
    </View>
  );
}

type Strip = { top: [number, number]; bottom: [number, number]; y: number; fill: string; shade: string };
const strips: Strip[] = [
  { top: [1177, 1184], bottom: [1188, 1194], y: 828, fill: '#b3c3a0', shade: '#94a382' },
  { top: [1184, 1221], bottom: [1198, 1229], y: 826, fill: '#43a899', shade: '#2c7f75' },
  { top: [1221, 1245], bottom: [1233, 1251], y: 823, fill: '#b3c3a0', shade: '#8b9a7b' },
  { top: [1246, 1278], bottom: [1263, 1292], y: 819, fill: '#41ab9c', shade: '#2b7c72' },
  { top: [1302, 1333], bottom: [1294, 1324], y: 813, fill: '#3a9c8e', shade: '#2f857a' },
  { top: [1336, 1354], bottom: [1336, 1353], y: 810, fill: '#b8c7a5', shade: '#9aa888' },
  { top: [1354, 1361], bottom: [1353, 1356], y: 809, fill: '#9fac8d', shade: '#222' },
  { top: [1361, 1394], bottom: [1355, 1389], y: 807, fill: '#43a899', shade: '#2f857a' },
  { top: [1394, 1400], bottom: [1388, 1395], y: 805, fill: '#b8c7a5', shade: '#cfd8c0' },
];

function PerspectiveView() {
  return (
    <View parts={['[+]', '[透视 ]', '[标准 ]', '[默认明暗处理 ]']} box={[964, 539, 749, 404]} shaded>
      {strips.map((s) => {
        const mid = (r: [number, number], u: number) => r[0] + (r[1] - r[0]) * u;
        return (
          <g key={s.top[0]}>
            <path d={`M${s.top[0]} ${s.y}H${s.top[1]}L${s.bottom[1]} 943H${s.bottom[0]}Z`} fill={s.fill} />
            {[0.28, 0.62, 0.9].map((u) => (
              <path key={u} d={`M${mid(s.top, u)} ${s.y}L${mid(s.bottom, u)} 943`} stroke={s.shade} strokeWidth={(s.top[1] - s.top[0]) / 10} />
            ))}
          </g>
        );
      })}
      <path d="M1208 880l4 60M1227 905v36M1373 860l-2 82" stroke="#c9a57c" />
      <path d="M1203 663l7 0 8-3 5 4 8-4 5 2 7 19-33 5z" fill="#3fae9e" />
      <path d="M1221 662l4 16M1207 664l5 14M1234 661l5 16" stroke="#2a7d73" strokeWidth="3" />
      <path d="M1155 681l9-4 5-2 5 3 10-4 6 2 12-5 5 3 10-4 6 2 10-2 8 2v9l-84 8z" fill="#b8c7a5" />
      <path d="M1155 681l9-3 8-2 6 4 8-5 5 4-4 4-31 4z" fill="#3fae9e" />
      <path d="M1328 671l4-17 6-2 8 3 8-3 10 1-3 14-30 6z" fill="#3fae9e" />
      <path d="M1345 656l-3 12" stroke="#2a7d73" strokeWidth="3" />
      <path d="M1333 671v-5l10-1 7-3 6 3 8-2 6-2 6 4 9-4 6 3 12-4 9 4 1 4-78 9z" fill="#b8c7a5" />
      <path d="M1380 667l6-5 5 3 9-5 6 2 7 2v4l-30 4z" fill="#3fae9e" />
      <path d="M1156 683l257-18 4 48-8 30 5 43-8 22-234 23z" fill="#000" />
      <path d="M1288.500 674l4.500 144" stroke="#6d7664" strokeWidth="0.800" strokeDasharray="7 5" />
      <ellipse cx="1660" cy="611" rx="33" ry="16" stroke="#81878b" strokeWidth="4" />
      <path d="M1644 576l14-1 14 0 4 10v26l-28 2z" fill="#8d8d8d" />
      <path d="M1644 576l28-1 4 10-29 2z" fill="#a0a0a0" />
      <text x="1662" y="606" textAnchor="middle" fontSize="15" fill="#666">前</text>
      <g fontSize="9" fill="#b4b4b4" textAnchor="middle">
        <text x="1667" y="632">南</text>
        <text x="1625" y="615">西</text>
        <text x="1692" y="608">东</text>
      </g>
      <path d="M989.500 917v-22" stroke="#2424b8" strokeWidth="1.500" />
      <path d="M990 917l3-12" stroke="#0c930c" />
      <path d="M990 917.500h30" stroke="#a01515" />
      <text x="990" y="897" fontSize="11" fill="#2424b8">z</text>
      <text x="1016" y="919" fontSize="10" fill="#a01515">x</text>
    </View>
  );
}

function TimeArea() {
  const ticks = Array.from({ length: 84 }, (_, i) => i);
  return (
    <>
      <div className="flex h-[18px] items-center gap-[2px] pl-[2px] text-[#ddd]">
        <button type="button" aria-label="上一帧" className="h-4 w-[14px] rounded-sm bg-[#5e5e5e] text-xs leading-4">&lt;</button>
        <button type="button" className="h-4 w-[123px] rounded-sm bg-[#666] text-[11px] leading-4">0 / 100</button>
        <button type="button" aria-label="下一帧" className="h-4 w-[14px] rounded-sm bg-[#5e5e5e] text-xs leading-4">&gt;</button>
      </div>
      <div className="flex h-[27px] border-t-2 border-[#111]">
        <button type="button" aria-label="迷你曲线编辑器" className="flex w-[51px] items-center pl-[15px]">
          <svg width="14" height="12" fill="none">
            <path d="M0 1h3M0 4h3M0 7h3M0 10h3" stroke="#ddd" />
            <path d="M5 6c1-8 3-6 4 0s3 6 4 0" stroke={TEAL} strokeWidth="1.500" />
          </svg>
        </button>
        <svg className="h-[25px] flex-1 bg-[#2b2b2b]" fill="none">
          <rect x="3" y="1" width="7" height="24" fill="#8a8420" />
          {ticks.map((i) => {
            const x = Math.round(6 + i * 13.97) + 0.5;
            return <path key={i} d={`M${x} 0v${i % 5 ? 11 : 25}`} stroke="#7a7a7a" shapeRendering="crispEdges" />;
          })}
          {ticks.filter((i) => i % 5 === 0).map((i) => (
            <text key={i} x={6 + i * 13.97} y="22" textAnchor="middle" fontSize="11" fill="#cfcfcf">{i}</text>
          ))}
        </svg>
      </div>
    </>
  );
}

const panelIcons: [string, React.ReactNode][] = [
  ['创建', <path key="a" d="M12 2v20M2 12h20" stroke="#aaa" strokeWidth="2.500" />],
  ['修改', <g key="b"><path d="M4 4h16v16H4z" stroke={TEAL} strokeWidth="1.500" /><path d="M2 2h4v4H2zM18 2h4v4h-4zM2 18h4v4H2zM18 18h4v4h-4z" fill={TEAL} /><path d="M7 18c0-6 4-10 10-11" stroke="#ddd" strokeWidth="3" /></g>],
  ['层次', <g key="c"><path d="M5 3h14v7H5z" fill="#999" /><path d="M12 10v4M5 18v-4h14v4" stroke="#3a8f87" strokeWidth="2" /><path d="M2 17h6v5H2zM16 17h6v5h-6z" fill="#3a8f87" /></g>],
  ['运动', <g key="d"><circle cx="14" cy="12" r="8" fill="#aaa" /><path d="M5 5c-3 4-3 10 0 14M1 7c-1 3-1 7 0 10" stroke="#3a8f87" strokeWidth="1.500" /></g>],
  ['显示', <g key="e" fill="#aaa"><path d="M2 4h20v13H2zM8 19h8v2H8z" /></g>],
  ['实用程序', <path key="f" d="M3 5a5 5 0 0 0 7 6l10 10 2-2L12 9a5 5 0 0 0-6-7l3 4-3 3z" fill="#aaa" />],
];

const modifiers = ['CFDVertexPaintChannel', 'CFDVertexPaintVelocity', 'Cloth', 'CreaseSet', 'FFD 2x2x2', 'FFD 3x3x3', 'FFD 4x4x4', 'FFD(圆柱体)', 'FFD(长方体)', 'FilterMeshColorsByHue', 'HSDS', 'MassFX RBody', 'mCloth', 'MultiRes', 'OpenSubdiv', 'Particle Skinner', 'Physique', 'STL 检查', 'UVW 变换', 'UVW 展开', 'UVW 贴图', 'UVW 贴图添加', 'UVW 贴图清除', 'X 变换', '专业优化', '优化', '体积选择', '保留', '修剪/延伸', '倒角', '倒角剖面', '倾斜', '切片', '切角', '删除样条线', '删除网格'];

function CommandPanel() {
  return (
    <aside className="flex w-[203px] shrink-0 flex-col bg-[#454545]">
      <div className="mt-[2px] flex h-[27px] pl-[3px] pr-2">
        {panelIcons.map(([label, icon], i) => (
          <button key={label} type="button" aria-label={label} className={`flex flex-1 items-center justify-center border-r border-[#333] ${i === 1 ? 'bg-[#454545]' : 'bg-[#3c3c3c]'}`}>
            <Ico size={17}>{icon}</Ico>
          </button>
        ))}
      </div>
      <div className="mt-[7px] flex h-[19px] gap-[6px] pl-[9px] pr-[6px]">
        <input aria-label="对象名称" defaultValue="Rectangle001" className="min-w-0 flex-1 bg-[#676767] px-[2px] text-[11px] leading-4 text-[#ddd]" />
        <button type="button" aria-label="对象颜色" className="w-[17px] border border-black bg-[#dc5ca0]" />
      </div>
      <div className="relative ml-[9px] mr-[5px] mt-3 h-[19px] bg-[#676767]">
        <select aria-label="修改器列表" className="block h-[19px] w-full appearance-none bg-transparent text-[11px]">
          <option />
        </select>
        <span className="pointer-events-none absolute right-[7px] top-2 border-x-[3px] border-t-[3px] border-x-transparent border-t-white" />
      </div>
      <div className="ml-2 mr-1 mt-px flex border border-b-0 border-[#1f78c8] bg-[#676767]">
        <ul role="listbox" aria-label="修改器" className="min-w-0 flex-1 font-['Liberation_Sans','Noto_Sans_CJK_SC',sans-serif] text-[11px] leading-[17px] text-[#dcdcdc]">
          {modifiers.map((m) => (
            <li key={m} role="option" aria-selected={m === '倒角剖面'} className={`h-[17px] whitespace-nowrap pl-[18px] ${m === '倒角剖面' ? 'bg-[#333] text-white' : ''}`}>
              {m}
            </li>
          ))}
        </ul>
        <div className="flex w-[17px] flex-col bg-[#f0f0f0]">
          <svg width="17" height="17" fill="none" stroke="#3a4a55" strokeWidth="2"><path d="M5 11l3.500-3.500L12 11" /></svg>
          <div className="mt-[154px] h-[273px] bg-[#cdcdcd]" />
        </div>
      </div>
    </aside>
  );
}

function Spinner({ axis, value }: { axis: string; value: string }) {
  return (
    <label className="flex items-center gap-1">
      <span className="w-[10px]">{axis}:</span>
      <span className="flex h-[17px] w-[68px] items-center bg-[#656565] pr-1">
        <input defaultValue={value} className="w-full min-w-0 flex-1 bg-transparent pl-[2px] text-[11px] leading-4 text-[#e2e2e2]" />
        <svg width="5" height="10" fill="#e8e8e8"><path d="M0 4l2.500-4L5 4zM0 6h5L2.500 10z" /></svg>
      </span>
    </label>
  );
}

function StatusBar() {
  return (
    <footer className="flex h-[51px] bg-[#454545] text-[11px] leading-4 text-[#e6e6e6]">
      <div className="flex w-[105px] flex-col gap-px border-r-2 border-[#222] py-[3px] pl-[2px] pr-[5px]">
        <input aria-label="宏录制器" className="h-[22px] min-w-0 border-2 border-[#f2f2f2] border-l-[#888] border-t-[#888] bg-[#dfc6c6]" />
        <input aria-label="MAXScript 侦听器" defaultValue="欢迎使用 MAXScript" className="h-[22px] min-w-0 border-2 border-[#f2f2f2] border-l-[#888] border-t-[#888] bg-white pb-[2px] pl-[2px] text-[12px] text-black" />
      </div>
      <div className="flex flex-1 flex-col gap-[9px] pl-[5px] pt-[7px]">
        <p>选择了 1 个 图形</p>
        <p>单击并拖动以选择并移动对象</p>
      </div>
      <div className="flex w-[895px] flex-col gap-[5px] pt-[5px]">
        <div className="flex h-[19px] items-center gap-[3px]">
          <button type="button" aria-label="孤立当前选择" className="flex w-6 justify-center">
            <Ico size={15}><path d="M1 6V1h5M18 1h5v5M23 18v5h-5M6 23H1v-5" stroke="#ddd" strokeWidth="2" /><path d="M7 7h10v10H7z" fill={TEAL} /></Ico>
          </button>
          <button type="button" aria-label="锁定选择" className="flex w-6 justify-center">
            <Ico size={15}><path d="M4 10h16v13H4z" fill="#ddd" /><path d="M7 10V6c0-6 10-6 10 0v4" stroke="#ddd" strokeWidth="2.500" /><path d="M12 14v5" stroke="#444" strokeWidth="2" /></Ico>
          </button>
          <button type="button" aria-label="绝对模式" className="flex w-6 justify-center">
            <Ico size={15}><path d="M1 1h22v22H1z" stroke="#ddd" strokeWidth="2" /><circle cx="12" cy="12" r="5" stroke="#ddd" strokeWidth="3" /><path d="M12 1v6M12 17v6M1 12h6M17 12h6" stroke="#ddd" strokeWidth="2.500" /></Ico>
          </button>
          <Spinner axis="X" value="201.691mm" />
          <Spinner axis="Y" value="-37.791mm" />
          <Spinner axis="Z" value="0.0mm" />
          <span className="whitespace-nowrap">栅格 = 1</span>
        </div>
        <div className="flex items-center gap-[6px] pl-[309px]">
          <button type="button" aria-label="时间标记" className="flex h-5 w-5 items-center justify-center rounded-sm bg-[#5b86c8]">
            <Ico size={14}><path d="M12 1l10 5v12l-10 5-10-5V6zM2 6l10 5 10-5M12 11v12" stroke="#eee" strokeWidth="2" /></Ico>
          </button>
          <span>添加时间</span>
        </div>
      </div>
    </footer>
  );
}

const apps: { label: string; run?: boolean; on?: boolean; icon: React.ReactNode }[] = [
  { label: 'Cortana', icon: <circle cx="12" cy="12" r="7" stroke="#fff" strokeWidth="2" /> },
  { label: '任务视图', icon: <g stroke="#fff" strokeWidth="1.300"><path d="M4 8h10v8H4zM4 3v3h10V3M4 21v-3h10v3M18 3v18" /><path d="M17 8h3v3h-3z" fill="#fff" /></g> },
  {
    label: 'Edge',
    icon: (
      <>
        <circle cx="12" cy="12" r="12" fill="#1b6fc4" />
        <path d="M0 12C0-3 24-4 24 9c0 6-8 7-9 4 3-5-1-8-5-7-4 0-8 2-10 6z" fill="#39c6a8" />
        <path d="M0 12c2-5 7-7 11-5-5 2-6 9-1 13 4 3 9 2 12-2-3 8-22 10-22-6z" fill="#0f5db0" />
        <path d="M15 13c1 3 9 2 9-4 0 7-6 10-12 7-1-2 0-3 3-3z" fill="#e9f5ff" />
      </>
    ),
  },
  { label: '文件资源管理器', run: true, icon: <><path d="M1 3h8l2 3h12v16H1z" fill="#f5c544" /><path d="M1 8h22v5H1z" fill="#ffdf80" /><path d="M5 22v-8h14v8h-4v-4H9v4z" fill="#3f95dc" /></> },
  { label: '截图工具', icon: <><ellipse cx="12" cy="9" rx="11" ry="8" fill="#e8e4e6" stroke="#b05c66" strokeWidth="1.500" transform="rotate(-20 12 9)" /><path d="M11 8l7 12M22 10L11 17" stroke="#8a98a8" strokeWidth="1.500" /><circle cx="19" cy="20" r="3" stroke="#2f7fc8" strokeWidth="2" /><circle cx="10" cy="18" r="2.500" stroke="#2f7fc8" strokeWidth="2" /></> },
  { label: '画图', run: true, icon: <><path d="M1 15C1 5 13 2 19 7c5 5 2 8-2 8-3 1 0 5-3 7-5 3-13 0-13-7z" fill="#cfe4f2" /><circle cx="6" cy="12" r="2" fill="#d64545" /><circle cx="11" cy="8" r="2" fill="#3ca35a" /><circle cx="6" cy="17" r="2" fill="#e8b52c" /><circle cx="11" cy="19" r="2" fill="#3d7fd0" /><path d="M12 18l9-16 2 2-8 15z" fill="#c98b3c" /></> },
  { label: 'Firefox', icon: <><circle cx="12" cy="13" r="11" fill="#ff7a1f" /><path d="M14 0c5 4 10 8 8 16-2 5-6 8-11 8 6-3 8-7 6-13-2-3-4-6-3-11z" fill="#ffc928" /><circle cx="11" cy="12" r="5" fill="#7b3bd1" /><path d="M1 8c4-2 8 0 9 3-3 0-3 4 0 5-5 3-9-2-9-8z" fill="#f0433a" /></> },
  { label: '看图', run: true, icon: <><rect x="0" y="0" width="24" height="24" rx="2" fill="#4d6fb8" /><rect x="3" y="2" width="18" height="20" fill="#fff" /><path d="M4 20C12 17 17 12 20 4v8c-4 6-9 9-16 10z" fill="#efa22c" /><path d="M4 11c5-1 8-4 10-9l-5 0c-1 3-3 5-5 6z" fill="#4a8fd6" /></> },
  { label: '录屏', run: true, icon: <><rect x="0" y="0" width="24" height="24" rx="4" fill="#fff" /><path d="M7 2l11 6-6 5-5-3z" fill="#ef2d6b" /><path d="M17 9l-9 6 2-7z" fill="#3fc4e8" /><path d="M3 18h8" stroke="#ef2d6b" strokeWidth="3" strokeDasharray="2 1" /><rect x="12" y="14" width="13" height="11" rx="2" fill="#9fd2f2" /><path d="M16 16v7M20 16v7" stroke="#1769b0" strokeWidth="2" /></> },
  { label: '3ds Max', run: true, on: true, icon: <><rect x="0" y="0" width="24" height="24" fill="#d9eaea" /><path d="M7 5c3-3 9-2 8 2-1 2-3 3-5 3 8 0 7 8 0 8-2 0-4-1-5-2" stroke="#16868a" strokeWidth="3.600" /><path d="M13 21h9" stroke="#2aa87f" strokeWidth="3" strokeDasharray="2.500 .5" /></> },
];

function Taskbar() {
  return (
    <div className="flex h-[39px] bg-gradient-to-r from-[#1b2823] via-[#34351f] to-[#3d3a26]">
      <button type="button" aria-label="开始" className="flex w-12 items-center justify-center">
        <svg width="17" height="17" fill="#fff"><path d="M0 2.500l7-1V8H0zM8 1.400L17 0v8H8zM0 9h7v6.500l-7-1zM8 9h9v8l-9-1.400z" /></svg>
      </button>
      <label className="flex w-[344px] items-center gap-[11px] bg-[#f2f2f2] pl-3 text-black">
        <svg width="17" height="18" fill="none" stroke="#222" strokeWidth="1.500"><circle cx="10.500" cy="6.500" r="5.500" /><path d="M6.500 10.500L1 17" /></svg>
        <input aria-label="搜索框" placeholder="在这里输入你要搜索的内容" className="min-w-0 flex-1 bg-transparent text-sm placeholder:text-[#2a2a2a]" />
      </label>
      {apps.map((a) => (
        <button key={a.label} type="button" aria-label={a.label} className={`relative flex w-[49px] items-center justify-center ${a.on ? 'bg-[#5d5e4a]' : ''}`}>
          <Ico>{a.icon}</Ico>
          {a.run && <span className={`absolute bottom-0 h-[3px] bg-[#76b9ed] ${a.on ? 'inset-x-0' : 'inset-x-1'}`} />}
        </button>
      ))}
    </div>
  );
}

function Watermark() {
  return (
    <div className="absolute bottom-0 right-0 flex h-[259px] w-[518px] items-start bg-white pl-[43px] pt-[70px] text-black">
      <svg width="145" height="118" viewBox="190 280 420 350" preserveAspectRatio="none" aria-hidden="true">
        <defs>
          <linearGradient id="bar" x1="0" y1="0" x2="1" y2="1">
            <stop offset="0" stopColor="#0d2f86" />
            <stop offset=".55" stopColor="#14398f" />
            <stop offset="1" stopColor="#5b8fd0" />
          </linearGradient>
        </defs>
        <path d="M225 432C270 345 370 285 470 288 560 292 612 340 584 430L571 428C578 360 530 318 470 315 380 315 290 350 225 432z" fill="#97c224" />
        <path d="M222 458C212 520 240 570 345 572 450 570 560 500 600 422 585 500 500 590 345 617 220 622 175 530 222 458z" fill="#173f94" />
        <path d="M405 345l65 35v22l-45 28v115l-20 3zM505 425l50 20-50 50z" fill="#dedede" />
        <path d="M230 487l60-36v101l-40-17zM318 372l73-37v220h-73zM428 438l64-29v109l-64 24z" fill="url(#bar)" />
      </svg>
      <div className="-ml-[2px] pt-[15px]">
        <p className="whitespace-nowrap font-['Noto_Sans_CJK_SC',sans-serif] text-[56px] font-black italic leading-[60px]">土木工程网</p>
        <p className="whitespace-nowrap font-['Open_Sans',sans-serif] text-[37px] font-semibold italic leading-[32px]">www.civilcn.com</p>
      </div>
    </div>
  );
}

export default function App() {
  return (
    <div className="relative flex h-screen flex-col overflow-hidden bg-white pb-[2px] font-['Noto_Sans','Noto_Sans_CJK_SC',sans-serif]">
      <Header />
      <Toolbar />
      <Ribbon />
      <main className="flex min-h-0 flex-1 overflow-hidden bg-[#454545]">
        <Explorer />
        <div className="flex min-w-0 flex-1 flex-col">
          <div className="grid min-h-0 flex-1 grid-cols-2 grid-rows-2 gap-x-[3px] gap-y-1 pl-px pr-[2px] pt-[2px]">
            <TopView />
            <FrontView />
            <LeftView />
            <PerspectiveView />
          </div>
          <TimeArea />
        </div>
        <CommandPanel />
      </main>
      <StatusBar />
      <Taskbar />
      <Watermark />
    </div>
  );
}
